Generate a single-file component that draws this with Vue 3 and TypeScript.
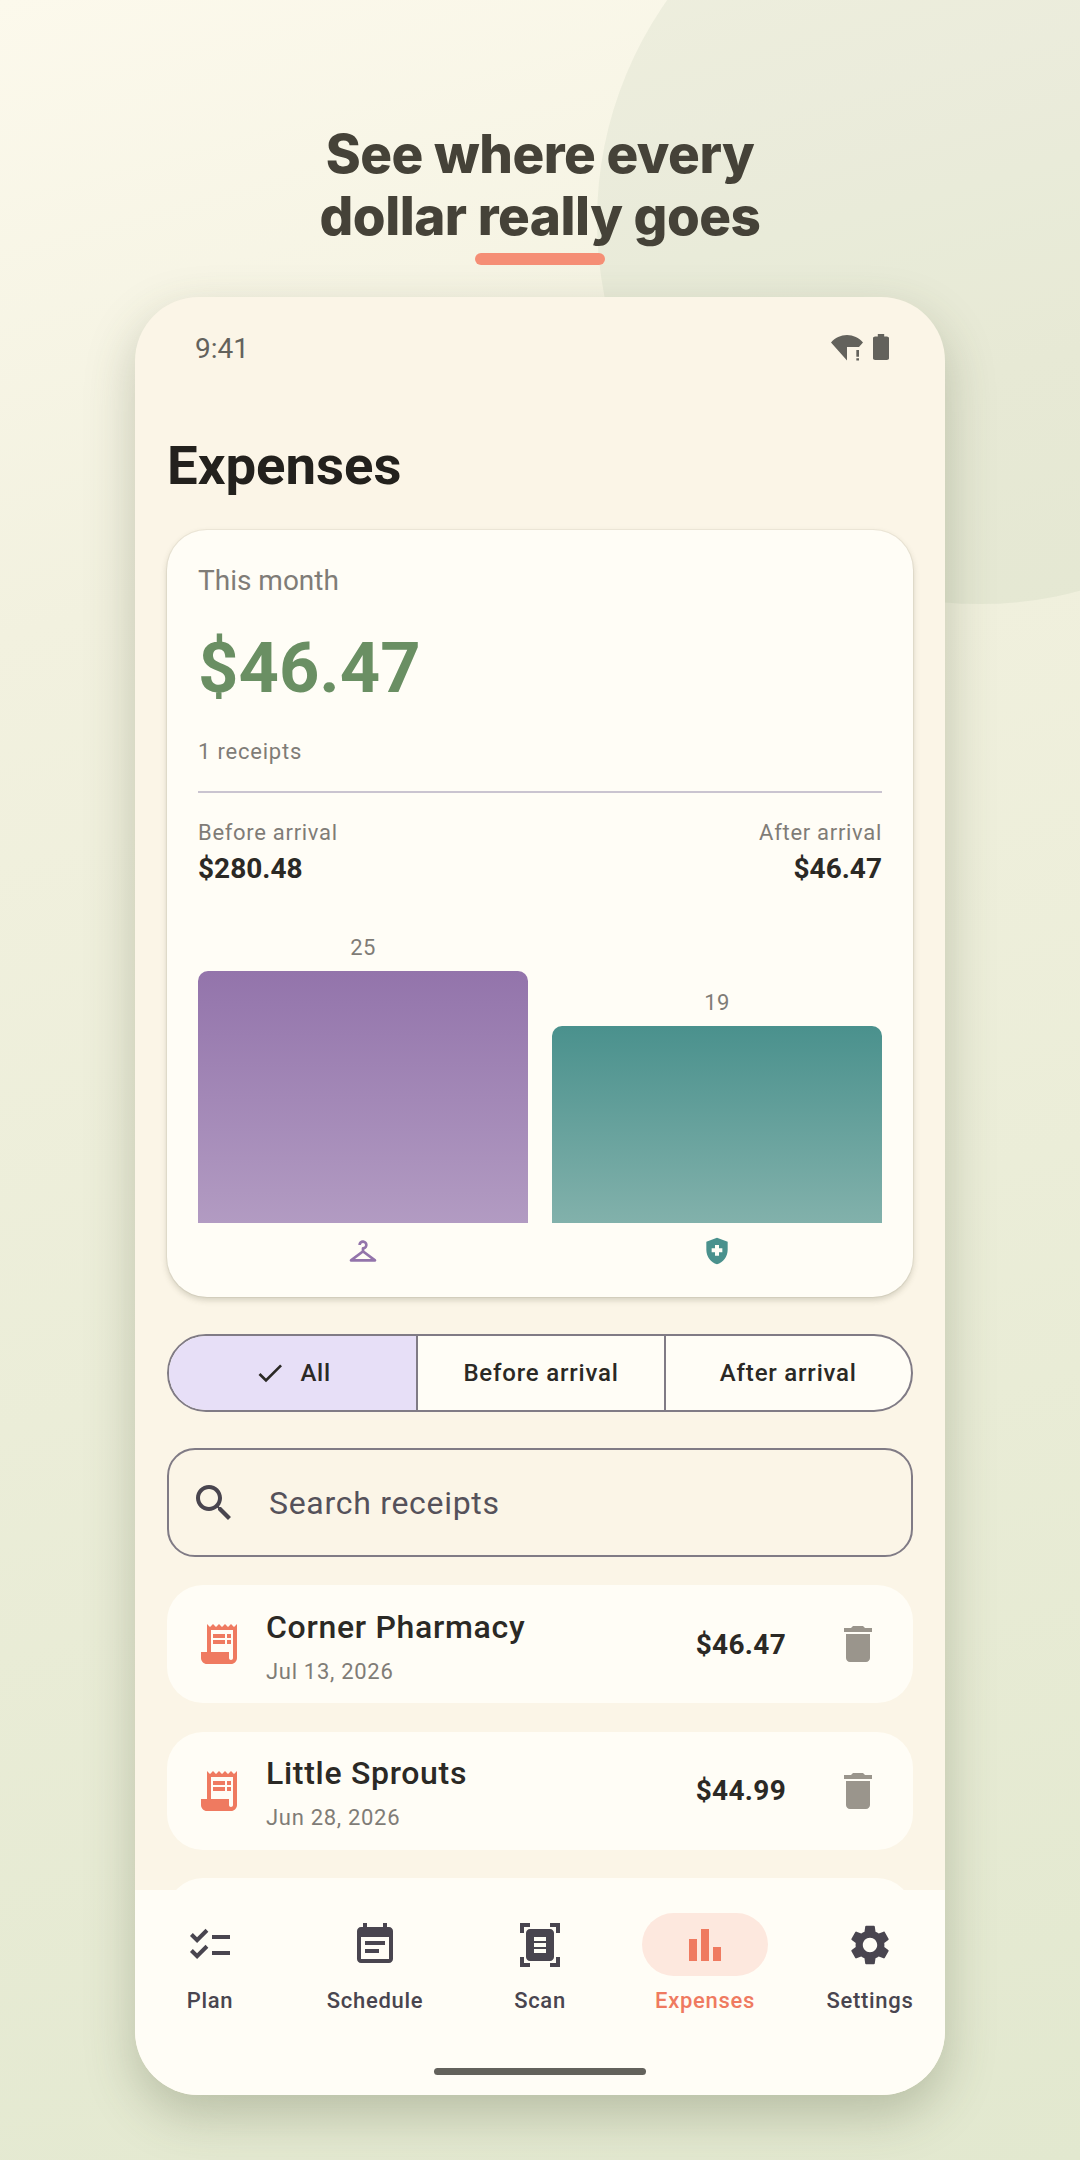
<script setup lang="ts">
  const bars = [
    { value: 25, height: 252, color: 'purple', icon: 'M21.6 18.2 13 11.75v-.91c1.65-.49 2.8-2.17 2.43-4.05-.26-1.31-1.3-2.4-2.61-2.7C10.54 3.57 8.5 5.3 8.5 7.5h2c0-.83.67-1.5 1.5-1.5s1.5.67 1.5 1.5c0 .84-.69 1.52-1.53 1.5-.54-.01-.97.45-.97.99v1.76L2.4 18.2c-.77.58-.36 1.8.6 1.8h18c.96 0 1.37-1.22.6-1.8zM6 18l6-4.5 6 4.5H6z' },
    { value: 19, height: 197, color: 'teal', icon: 'M10.5 13H8v-3h2.5V7.5h3V10H16v3h-2.5v2.5h-3V13zM12 2 4 5v6.09c0 5.05 3.41 9.76 8 10.91 4.59-1.15 8-5.86 8-10.91V5l-8-3z' },
  ]

  const receipts = [
    { name: 'Corner Pharmacy', date: 'Jul 13, 2026', amount: '$46.47' },
    { name: 'Little Sprouts', date: 'Jun 28, 2026', amount: '$44.99' },
  ]

  const tabs = [
    { label: 'Plan', icon: 'M22 7h-9v2h9V7zm0 8h-9v2h9v-2zM5.54 11 2 7.46l1.41-1.41 2.12 2.12 4.24-4.24 1.41 1.41L5.54 11zm0 8L2 15.46l1.41-1.41 2.12 2.12 4.24-4.24 1.41 1.41L5.54 19z' },
    { label: 'Schedule', icon: 'M17 10H7v2h10v-2zm2-7h-1V1h-2v2H8V1H6v2H5c-1.11 0-1.99.9-1.99 2L3 19c0 1.1.89 2 2 2h14c1.1 0 2-.9 2-2V5c0-1.1-.9-2-2-2zm0 16H5V8h14v11zm-5-5H7v2h7v-2z' },
    { label: 'Scan', icon: 'M7 3H4v3H2V1h5v2zm15 3V1h-5v2h3v3h2zM7 21H4v-3H2v5h5v-2zm13-3v3h-3v2h5v-5h-2zM19 18c0 1.1-.9 2-2 2H7c-1.1 0-2-.9-2-2V6c0-1.1.9-2 2-2h10c1.1 0 2 .9 2 2v12zM15 8H9v2h6V8zm0 3H9v2h6v-2zm0 3H9v2h6v-2z' },
    { label: 'Expenses', active: true, icon: 'M4 9h4v11H4zM16 13h4v7h-4zM10 4h4v16h-4z' },
    { label: 'Settings', icon: 'M19.14 12.94c.04-.3.06-.61.06-.94 0-.32-.02-.64-.07-.94l2.03-1.58c.18-.14.23-.41.12-.61l-1.92-3.32c-.12-.22-.37-.29-.59-.22l-2.39.96c-.5-.38-1.03-.7-1.62-.94l-.36-2.54c-.04-.24-.24-.41-.48-.41h-3.84c-.24 0-.43.17-.47.41l-.36 2.54c-.59.24-1.13.57-1.62.94l-2.39-.96c-.22-.08-.47 0-.59.22L2.74 8.87c-.12.21-.08.47.12.61l2.03 1.58c-.05.3-.09.63-.09.94s.02.64.07.94l-2.03 1.58c-.18.14-.23.41-.12.61l1.92 3.32c.12.22.37.29.59.22l2.39-.96c.5.38 1.03.7 1.62.94l.36 2.54c.05.24.24.41.48.41h3.84c.24 0 .44-.17.47-.41l.36-2.54c.59-.24 1.13-.56 1.62-.94l2.39.96c.22.08.47 0 .59-.22l1.92-3.32c.12-.22.07-.47-.12-.61l-2.01-1.58zM12 15.6c-1.98 0-3.6-1.62-3.6-3.6s1.62-3.6 3.6-3.6 3.6 1.62 3.6 3.6-1.62 3.6-3.6 3.6z' },
  ]

  const RECEIPT_ICON = 'M19.5 3.5 18 2l-1.5 1.5L15 2l-1.5 1.5L12 2l-1.5 1.5L9 2 7.5 3.5 6 2v14H3v3c0 1.66 1.34 3 3 3h12c1.66 0 3-1.34 3-3V2l-1.5 1.5zM19 19c0 .55-.45 1-1 1s-1-.45-1-1v-3H8V5h11v14zM9 7h6v2H9zM16 7h2v2h-2zM9 10h6v2H9zM16 10h2v2h-2z'
  const DELETE_ICON = 'M6 19c0 1.1.9 2 2 2h8c1.1 0 2-.9 2-2V7H6v12zM19 4h-3.5l-1-1h-5l-1 1H5v2h14V4z'
</script>

<template>
  <div class="page">
    <div class="blob" />

    <header class="hero">
      <h1 class="hero-title">See where every<br>dollar really goes</h1>
      <div class="hero-line" />
    </header>

    <div class="phone">
      <div class="status">
        <span class="status-time">9:41</span>
        <div class="status-icons">
          <svg class="icon-wifi" viewBox="0 0 24 24" preserveAspectRatio="none" fill="currentColor">
            <path d="M24 8.98C20.93 5.9 16.69 4 12 4S3.07 5.9 0 8.98L12 21v-9h8.99L24 8.98z" />
            <path d="M19 14h2v4.5h-2zM19 19.5h2v1.5h-2z" />
          </svg>
          <svg class="icon-battery" viewBox="7 2 10 20" preserveAspectRatio="none" fill="currentColor">
            <path d="M15.67 4H14V2h-4v2H8.33C7.6 4 7 4.6 7 5.33v15.33C7 21.4 7.6 22 8.33 22h7.33c.74 0 1.34-.6 1.34-1.33V5.33C17 4.6 16.4 4 15.67 4z" />
          </svg>
        </div>
      </div>

      <main class="screen">
        <h2 class="screen-title">Expenses</h2>

        <section class="summary">
          <div class="summary-label">This month</div>
          <div class="summary-total">$46.47</div>
          <div class="summary-count">1 receipts</div>
          <div class="summary-divider" />

          <div class="summary-split">
            <div>
              <div class="split-label">Before arrival</div>
              <div class="split-value">$280.48</div>
            </div>
            <div class="split-right">
              <div class="split-label">After arrival</div>
              <div class="split-value">$46.47</div>
            </div>
          </div>

          <div class="chart">
            <div v-for="b in bars" :key="b.value" class="chart-col">
              <div class="chart-value">{{ b.value }}</div>
              <div class="chart-bar" :class="b.color" :style="{ height: b.height + 'px' }" />
              <svg class="chart-icon" :class="b.color" viewBox="0 0 24 24" fill="currentColor">
                <path :d="b.icon" />
              </svg>
            </div>
          </div>
        </section>

        <div class="segments">
          <div class="segment segment-on">
            <svg class="segment-check" viewBox="0 0 24 24" fill="currentColor">
              <path d="M9 16.17 4.83 12l-1.42 1.41L9 19 21 7l-1.41-1.41z" />
            </svg>
            All
          </div>
          <div class="segment">Before arrival</div>
          <div class="segment">After arrival</div>
        </div>

        <div class="search">
          <svg class="search-icon" viewBox="0 0 24 24" fill="currentColor">
            <path d="M15.5 14h-.79l-.28-.27C15.41 12.59 16 11.11 16 9.5 16 5.91 13.09 3 9.5 3S3 5.91 3 9.5 5.91 16 9.5 16c1.61 0 3.09-.59 4.23-1.57l.27.28v.79l5 4.99L20.49 19l-4.99-5zm-6 0C7.01 14 5 11.99 5 9.5S7.01 5 9.5 5 14 7.01 14 9.5 11.99 14 9.5 14z" />
          </svg>
          <span>Search receipts</span>
        </div>

        <div class="receipts">
          <div v-for="r in receipts" :key="r.name" class="receipt">
            <svg class="receipt-icon" viewBox="0 0 24 24" fill="currentColor">
              <path :d="RECEIPT_ICON" />
            </svg>
            <div class="receipt-text">
              <div class="receipt-name">{{ r.name }}</div>
              <div class="receipt-date">{{ r.date }}</div>
            </div>
            <div class="receipt-amount">{{ r.amount }}</div>
            <svg class="receipt-delete" viewBox="0 0 24 24" fill="currentColor">
              <path :d="DELETE_ICON" />
            </svg>
          </div>
          <!-- next row, only its top edge shows above the nav -->
          <div class="receipt" />
        </div>
      </main>

      <nav class="nav">
        <div class="nav-items">
          <div v-for="t in tabs" :key="t.label" class="nav-item" :class="{ 'nav-item-on': t.active }">
            <div class="nav-pill">
              <svg class="nav-icon" viewBox="0 0 24 24" fill="currentColor" fill-rule="evenodd">
                <path :d="t.icon" />
              </svg>
            </div>
            <span class="nav-label">{{ t.label }}</span>
          </div>
        </div>
        <div class="home-bar" />
      </nav>
    </div>
  </div>
</template>

<style>
html, body {
  margin: 0;
}
</style>

<style scoped>
.page {
  position: relative;
  width: 1080px;
  height: 2160px;
  overflow: hidden;
  background: linear-gradient(165deg, #fcf9ec 0%, #f2f1df 26%, #e2e8cf 100%);
  font-family: Roboto, "Noto Sans", sans-serif;
}
.blob {
  position: absolute;
  left: 597px;
  top: -162px;
  width: 766px;
  height: 766px;
  border-radius: 50%;
  background: rgba(107, 143, 99, .08);
}
.hero {
  position: relative;
  padding-top: 123px;
  display: flex;
  flex-direction: column;
  align-items: center;
}
.hero-title {
  margin: 0;
  font-family: Inter, "Liberation Sans", sans-serif;
  font-size: 53px;
  line-height: 62px;
  font-weight: 800;
  letter-spacing: -.5px;
  color: #454238;
  text-align: center;
}
.hero-line {
  width: 130px;
  height: 12px;
  margin-top: 6px;
  border-radius: 6px;
  background: #f58e75;
}
.phone {
  position: relative;
  width: 810px;
  height: 1798px;
  margin: 32px auto 0;
  border-radius: 64px;
  background: #fbf5e7;
  box-shadow: 0 20px 50px rgba(70, 80, 50, .28);
  overflow: hidden;
  display: flex;
  flex-direction: column;
}
.status {
  flex-shrink: 0;
  height: 100px;
  padding: 0 56px 0 60px;
  display: flex;
  align-items: center;
  justify-content: space-between;
  color: #63625c;
}
.status-time {
  font-size: 28px;
  position: relative;
  top: 1px;
}
.status-icons {
  display: flex;
  align-items: center;
  gap: 10px;
}
.icon-wifi {
  width: 32px;
  height: 36px;
}
.icon-battery {
  width: 16px;
  height: 26px;
}
.screen {
  flex: 1;
  min-height: 0;
  padding: 0 32px;
  overflow: hidden;
}
.screen-title {
  margin: 38px 0 35px;
  font-size: 54.5px;
  line-height: 60px;
  font-weight: 700;
  color: #23211d;
}
.summary {
  padding: 33px 31px 30px;
  border-radius: 40px;
  background: #fffdf6;
  box-shadow: 0 3px 6px rgba(70, 70, 40, .22), 0 0 0 1px rgba(70, 70, 40, .06);
}
.summary-label {
  font-size: 28px;
  line-height: 36px;
  color: #7f7c77;
}
.summary-total {
  margin-top: 27px;
  font-size: 70.5px;
  line-height: 84px;
  font-weight: 700;
  color: #6a8f63;
}
.summary-count {
  margin-top: 27px;
  font-size: 22px;
  line-height: 30px;
  letter-spacing: .8px;
  color: #7f7c77;
}
.summary-divider {
  height: 2px;
  margin-top: 24px;
  background: #cac4d0;
}
.summary-split {
  display: flex;
  justify-content: space-between;
  margin-top: 26px;
}
.split-right {
  text-align: right;
}
.split-label {
  font-size: 22px;
  line-height: 28px;
  letter-spacing: .7px;
  color: #7f7c77;
}
.split-value {
  margin-top: 5px;
  font-size: 28px;
  line-height: 34px;
  font-weight: 700;
  color: #2b2925;
}
.chart {
  display: flex;
  align-items: flex-end;
  gap: 24px;
  margin-top: 48px;
}
.chart-col {
  flex: 1;
  display: flex;
  flex-direction: column;
  align-items: center;
}
.chart-value {
  margin-bottom: 9px;
  font-size: 22px;
  line-height: 28px;
  letter-spacing: .5px;
  color: #7f7c77;
}
.chart-bar {
  width: 100%;
  border-radius: 10px 10px 0 0;
}
.chart-bar.purple {
  background: linear-gradient(180deg, #9374ab, #b29bc2);
}
.chart-bar.teal {
  background: linear-gradient(180deg, #4a918d, #82b1ab);
}
.chart-icon {
  width: 32px;
  height: 32px;
  margin-top: 12px;
}
.chart-icon.purple {
  color: #9374ab;
}
.chart-icon.teal {
  color: #4a918d;
}
.segments {
  display: grid;
  grid-template-columns: repeat(3, 1fr);
  height: 78px;
  margin-top: 37px;
  box-sizing: border-box;
  border: 2px solid #807b85;
  border-radius: 39px;
  background: #fffdf6;
  overflow: hidden;
}
.segment {
  display: flex;
  align-items: center;
  justify-content: center;
  font-size: 24px;
  font-weight: 480;
  letter-spacing: .8px;
  color: #2b2925;
}
.segment + .segment {
  border-left: 2px solid #807b85;
}
.segment-on {
  background: #e7dff7;
}
.segment-check {
  width: 32px;
  height: 32px;
  margin-right: 14px;
}
.search {
  display: flex;
  align-items: center;
  gap: 31px;
  height: 109px;
  margin-top: 36px;
  padding-left: 21px;
  box-sizing: border-box;
  border: 2px solid #807b85;
  border-radius: 28px;
  font-size: 32px;
  letter-spacing: .7px;
  color: #55515a;
}
.search-icon {
  width: 48px;
  height: 48px;
  color: #49454f;
}
.receipts {
  display: flex;
  flex-direction: column;
  gap: 28.5px;
  margin-top: 28px;
}
.receipt {
  flex-shrink: 0;
  display: flex;
  align-items: center;
  height: 118px;
  padding: 0 31px 0 28px;
  box-sizing: border-box;
  border-radius: 36px;
  background: #fffdf6;
}
.receipt-icon {
  flex-shrink: 0;
  width: 48px;
  height: 48px;
  color: #ef7a60;
}
.receipt-text {
  flex: 1;
  margin-left: 23px;
  padding-top: 5px;
}
.receipt-name {
  font-size: 32px;
  line-height: 40px;
  font-weight: 500;
  letter-spacing: .7px;
  color: #2b2925;
}
.receipt-date {
  margin-top: 10px;
  font-size: 22px;
  line-height: 30px;
  letter-spacing: .7px;
  color: #7f7c77;
}
.receipt-amount {
  font-size: 28px;
  font-weight: 700;
  letter-spacing: .3px;
  color: #2b2925;
}
.receipt-delete {
  flex-shrink: 0;
  width: 48px;
  height: 48px;
  margin-left: 48px;
  color: #9a958c;
}
.nav {
  flex-shrink: 0;
  height: 205px;
  background: #fffdf6;
  display: flex;
  flex-direction: column;
  align-items: center;
}
.nav-items {
  display: flex;
  justify-content: center;
  width: 825px;
  padding-top: 23px;
}
.nav-item {
  width: 165px;
  display: flex;
  flex-direction: column;
  align-items: center;
  color: #49454f;
}
.nav-item-on {
  color: #ef7a60;
}
.nav-pill {
  width: 126px;
  height: 63px;
  border-radius: 32px;
  display: flex;
  align-items: center;
  justify-content: center;
}
.nav-item-on .nav-pill {
  background: #fde8de;
}
.nav-icon {
  width: 48px;
  height: 48px;
}
.nav-label {
  margin-top: 10px;
  font-size: 22px;
  line-height: 30px;
  font-weight: 480;
  letter-spacing: .7px;
}
.home-bar {
  width: 212px;
  height: 7px;
  margin-top: 52px;
  border-radius: 4px;
  background: #63625c;
}
</style>
